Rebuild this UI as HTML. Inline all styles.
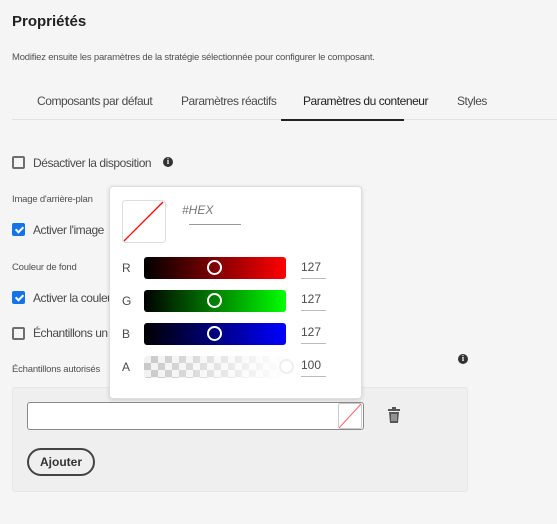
<!DOCTYPE html>
<html><head><meta charset="utf-8"><style>
*{margin:0;padding:0;box-sizing:border-box}
body{width:557px;height:524px;background:#f5f5f5;font-family:"Liberation Sans",sans-serif;color:#2c2c2c;position:relative;overflow:hidden}
.a{position:absolute;white-space:nowrap}
.cb{position:absolute;width:13px;height:13px;border:2px solid #6e6e6e;border-radius:2px;background:#f5f5f5}
.cb.on{background:#1473e6;border-color:#1473e6}
.cb.on:after{content:"";position:absolute;left:3px;top:0px;width:3px;height:6px;border:solid #fff;border-width:0 2px 2px 0;transform:rotate(45deg)}
.lbl{font-size:12px;letter-spacing:-0.45px;color:#4b4b4b}
.sm{font-size:9.5px;letter-spacing:-0.2px;color:#505050}
.sl{position:absolute;left:144px;width:142px;height:22px;border-radius:3px}
.kn{position:absolute;left:207px;width:15px;height:15px;border:2px solid #fff;border-radius:50%}
.val{position:absolute;left:301px;width:25px;font-size:12px;color:#4b4b4b;border-bottom:1px solid #bbb;padding-bottom:4px}
.info{position:absolute;width:10px;height:10px;border-radius:50%;background:#333;color:#fff;font-size:8px;font-weight:bold;text-align:center;line-height:10px;font-family:"Liberation Serif",serif}
.pl{position:absolute;left:122px;font-size:12px;color:#4b4b4b}
</style></head><body>
<div class="a" style="left:12px;top:13px;font-size:15px;font-weight:bold;color:#222">Propriétés</div>
<div class="a sm" style="left:12px;top:52px">Modifiez ensuite les paramètres de la stratégie sélectionnée pour configurer le composant.</div>
<div class="a lbl" style="left:37px;top:94px">Composants par défaut</div>
<div class="a lbl" style="left:181px;top:94px">Paramètres réactifs</div>
<div class="a lbl" style="left:303px;top:94px;color:#222">Paramètres du conteneur</div>
<div class="a lbl" style="left:457px;top:94px">Styles</div>
<div class="a" style="left:12px;top:119px;width:545px;height:1px;background:#e1e1e1"></div>
<div class="a" style="left:281px;top:119px;width:123px;height:2px;background:#222"></div>

<div class="cb" style="left:12px;top:156px"></div>
<div class="a lbl" style="left:33px;top:156px">Désactiver la disposition</div>
<div class="info" style="left:163px;top:157px">i</div>

<div class="a sm" style="left:12px;top:194px">Image d'arrière-plan</div>
<div class="cb on" style="left:12px;top:223px"></div>
<div class="a lbl" style="left:33px;top:223px">Activer l'image</div>
<div class="a sm" style="left:12px;top:262px">Couleur de fond</div>
<div class="cb on" style="left:12px;top:291px"></div>
<div class="a lbl" style="left:33px;top:291px">Activer la couleur</div>
<div class="cb" style="left:12px;top:327px"></div>
<div class="a lbl" style="left:33px;top:326px">Échantillons un</div>
<div class="a sm" style="left:12px;top:364px">Échantillons autorisés</div>
<div class="info" style="left:458px;top:354px">i</div>

<div class="a" style="left:12px;top:387px;width:456px;height:105px;background:#efefef;border:1px solid #e6e6e6;border-radius:3px"></div>
<div class="a" style="left:27px;top:402px;width:337px;height:28px;background:#fff;border:1px solid #8a8a8a;border-radius:3px"></div>
<svg class="a" style="left:338px;top:403px" width="24" height="26"><rect x="0.5" y="0.5" width="23" height="25" rx="2" fill="#fff" stroke="#ccc"/><line x1="1" y1="25" x2="23" y2="1" stroke="#f66" stroke-width="1"/></svg>
<svg class="a" style="left:387px;top:407px" width="14" height="16" viewBox="0 0 14 16"><rect x="1" y="2" width="12" height="2" fill="#555"/><rect x="5" y="0" width="4" height="2" fill="#555"/><path d="M2 5h10l-1 11H3z" fill="#555"/><path d="M5 7v7M7 7v7M9 7v7" stroke="#efefef" stroke-width="0.8"/></svg>
<div class="a" style="left:27px;top:448px;width:68px;height:28px;border:2px solid #444;border-radius:14px;font-size:12px;font-weight:bold;text-align:center;line-height:24px;color:#333">Ajouter</div>

<div class="a" style="left:109px;top:186px;width:253px;height:213px;background:#fff;border:1px solid #ddd;border-radius:4px;box-shadow:0 1px 4px rgba(0,0,0,.15)"></div>
<svg class="a" style="left:122px;top:200px" width="44" height="43"><rect x="0.5" y="0.5" width="43" height="42" rx="3" fill="#fff" stroke="#ddd"/><line x1="2" y1="41" x2="41" y2="2" stroke="#f00" stroke-width="1.3"/></svg>
<div class="a" style="left:182px;top:203px;font-size:12px;font-style:italic;color:#777">#HEX</div>
<div class="a" style="left:189px;top:224px;width:52px;height:1px;background:#999"></div>

<div class="pl" style="top:261px">R</div>
<div class="sl" style="top:257px;background:linear-gradient(90deg,#000,#f00)"></div>
<div class="kn" style="top:260px"></div>
<div class="val" style="top:260px">127</div>
<div class="pl" style="top:294px">G</div>
<div class="sl" style="top:290px;background:linear-gradient(90deg,#000,#0f0)"></div>
<div class="kn" style="top:293px"></div>
<div class="val" style="top:292px">127</div>
<div class="pl" style="top:327px">B</div>
<div class="sl" style="top:323px;background:linear-gradient(90deg,#000,#00f)"></div>
<div class="kn" style="top:326px"></div>
<div class="val" style="top:325px">127</div>
<div class="pl" style="top:360px">A</div>
<div class="sl" style="top:356px;background:linear-gradient(90deg,rgba(245,245,245,0),#fff),repeating-conic-gradient(#c8c8c8 0 25%,#f2f2f2 0 50%) 0 0/14px 14px"></div>
<div class="kn" style="top:359px;left:279px;border-color:#eee"></div>
<div class="val" style="top:358px">100</div>
</body></html>
